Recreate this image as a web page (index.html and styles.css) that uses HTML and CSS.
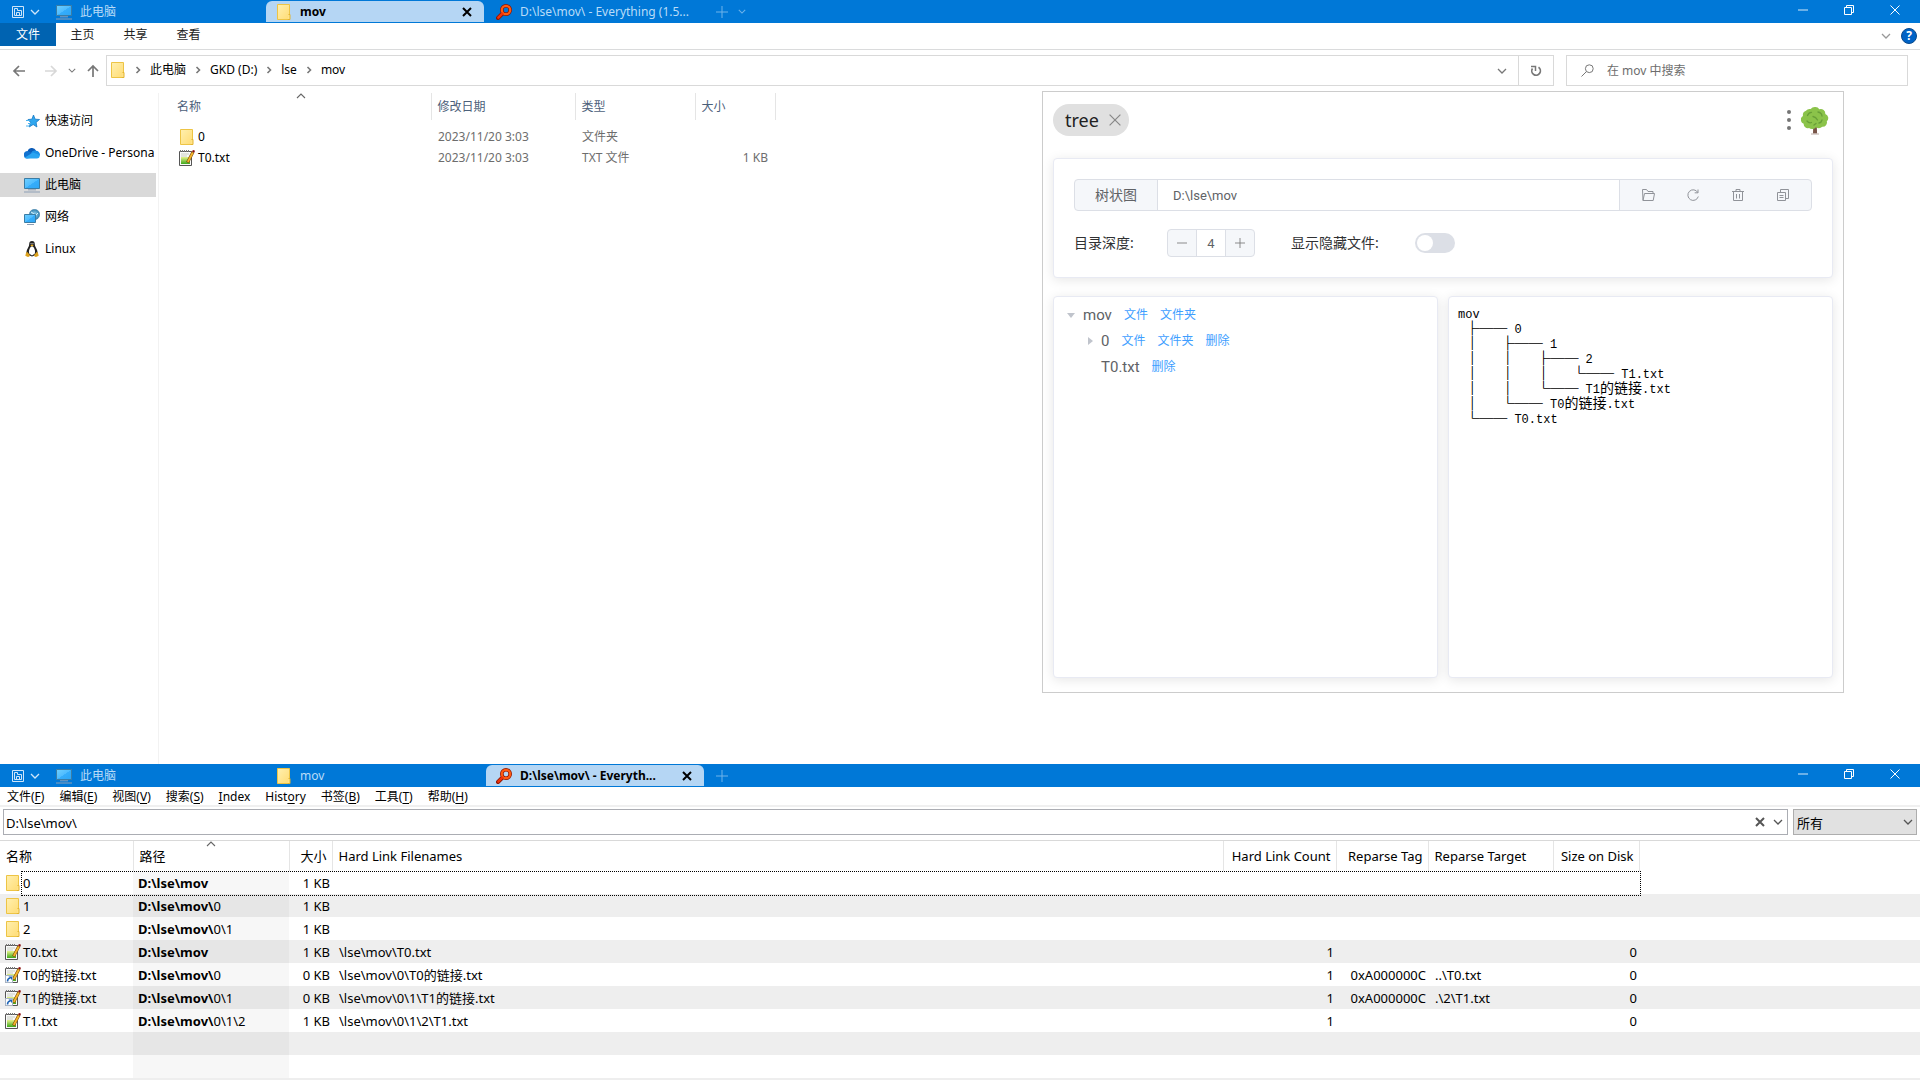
FILE: index.html
```html
<!DOCTYPE html>
<html lang="zh-CN">
<head>
<meta charset="utf-8">
<title>mov</title>
<link rel="stylesheet" href="styles.css">
</head>
<body>
<svg class="defs" aria-hidden="true">
  <defs>
    <linearGradient id="g-screen" x1="0" y1="0" x2="1" y2="1"><stop offset="0" stop-color="#6fd0ff"/><stop offset=".5" stop-color="#4fbcff"/><stop offset=".52" stop-color="#35adfb"/><stop offset="1" stop-color="#2ea6f5"/></linearGradient>
    <linearGradient id="g-folder" x1="0" y1="0" x2="1" y2="1"><stop offset="0" stop-color="#fff0b0"/><stop offset="1" stop-color="#ffdc74"/></linearGradient>
    <linearGradient id="g-green" x1="0" y1="0" x2="0" y2="1"><stop offset="0" stop-color="#e6f28a"/><stop offset="1" stop-color="#3fa81c"/></linearGradient>
    <radialGradient id="g-globe"><stop offset="0" stop-color="#9fdcf5"/><stop offset="1" stop-color="#2f7fae"/></radialGradient>
  </defs>
  <symbol id="i-folder" viewBox="0 0 16 16"><path d="M1.5.5h12v15h-12z" fill="url(#g-folder)" stroke="#edc445"/><path d="M12.500 10.500h1.500v5h-2.500" fill="#ffe38a" stroke="#e3b431"/></symbol>
  <symbol id="i-pc" viewBox="0 0 16 16"><path d="M.5 1.500h15v10h-15z" fill="url(#g-screen)" stroke="#3a7ca5"/><path d="M4 12.800h8M0 15h16" stroke="#8d9fb5" fill="none"/></symbol>
  <symbol id="i-note" viewBox="0 0 16 16"><path d="M.5 1.500h12v14H.5z" fill="#fafafa" stroke="#555"/><path d="M2 4h8M2 6h6" stroke="#c9cec2"/><path d="M2 7h9v7H2z" fill="url(#g-green)"/><path d="M1 1h10" stroke="#777" stroke-width="2" stroke-dasharray="1 1"/><path d="M14 2L8.500 12.500" stroke="#7a4a08" stroke-width="3"/><path d="M13.800 2.500L8.800 12" stroke="#f5b52c" stroke-width="1.900"/><path d="M12.800 1.300l1.400-1.300 1.800.8-.8 2z" fill="#8c0c0c"/></symbol>
  <symbol id="i-notelink" viewBox="0 0 16 16"><use href="#i-note"/><path d="M.5 8.500h7v7h-7z" fill="#fff" stroke="#a8b4c4"/><path d="M2.500 14.500q0-3 2.500-3.500" stroke="#1c62b5" stroke-width="1.600" fill="none"/><path d="M3.500 9.500h3.500V13z" fill="#1c62b5"/></symbol>
  <symbol id="i-find" viewBox="0 0 16 16"><path d="M2 14L6 10" stroke="#8d1400" stroke-width="4" stroke-linecap="round"/><circle cx="10" cy="6" r="4.200" fill="none" stroke="#8d1400" stroke-width="3.600"/><circle cx="10" cy="6" r="4.200" fill="none" stroke="#ff5a10" stroke-width="2.200"/><path d="M2.300 13.700L6.300 9.700" stroke="#f2330a" stroke-width="2.400" stroke-linecap="round"/></symbol>
  <symbol id="i-tabs" viewBox="0 0 12 12"><path d="M.5.5h11v11H.5z" fill="none" stroke="currentColor"/><path d="M2.500 9.500v-7h3v2h4v5zM4.500 9.500v-3h3v3" fill="none" stroke="currentColor"/></symbol>
  <symbol id="i-down" viewBox="0 0 10 6"><path d="M1 1l4 4 4-4" fill="none" stroke="currentColor" stroke-width="1.300"/></symbol>
  <symbol id="i-right" viewBox="0 0 6 8"><path d="M1.500 1l3 3-3 3" fill="none" stroke="currentColor" stroke-width="1.600"/></symbol>
  <symbol id="i-up" viewBox="0 0 10 6"><path d="M1 5l4-4 4 4" fill="none" stroke="currentColor" stroke-width="1.100"/></symbol>
  <symbol id="i-x" viewBox="0 0 10 10"><path d="M.5.5l9 9M9.500.5l-9 9" fill="none" stroke="currentColor"/></symbol>
  <symbol id="i-xb" viewBox="0 0 10 10"><path d="M1 1l8 8M9 1L1 9" fill="none" stroke="currentColor" stroke-width="2"/></symbol>
  <symbol id="i-plus" viewBox="0 0 12 12"><path d="M6 0v12M0 6h12" fill="none" stroke="currentColor"/></symbol>
  <symbol id="i-minus" viewBox="0 0 12 12"><path d="M0 6h12" fill="none" stroke="currentColor"/></symbol>
  <symbol id="i-restore" viewBox="0 0 10 10"><path d="M.5 2.500h7v7h-7zM2.500 2V.5h7v7H8" fill="none" stroke="currentColor"/></symbol>
  <symbol id="i-back" viewBox="0 0 14 12"><path d="M7 1L2 6l5 5M2 6h11" fill="none" stroke="currentColor" stroke-width="1.700"/></symbol>
  <symbol id="i-fwd" viewBox="0 0 14 12"><path d="M7 1l5 5-5 5M12 6H1" fill="none" stroke="currentColor" stroke-width="1.700"/></symbol>
  <symbol id="i-arrowup" viewBox="0 0 12 14"><path d="M1 7l5-5 5 5M6 2v11" fill="none" stroke="currentColor" stroke-width="1.700"/></symbol>
  <symbol id="i-reload" viewBox="0 0 12 12"><path d="M8.500 2.300A4.300 4.300 0 1 1 2.500 3.500" fill="none" stroke="currentColor" stroke-width="1.700"/><path d="M1 1.500h4.500V6" fill="none" stroke="currentColor" stroke-width="1.500"/></symbol>
  <symbol id="i-search" viewBox="0 0 13 13"><circle cx="8.300" cy="4.700" r="3.900" fill="none" stroke="currentColor"/><path d="M5.500 7.500l-5 5" stroke="currentColor"/></symbol>
  <symbol id="i-star" viewBox="0 0 16 16"><path d="M9.500 2l1.600 4.200 4.400.3-3.400 2.900.8 4.600-3.700-2.500L5.200 14l1.400-4.600L4 6.500l3.900-.3z" fill="#2fa7ef" stroke="#1177c4" stroke-width=".8"/><path d="M2 7.500h4M4 10.500h3M2 13h3.500" stroke="#4cb3ef"/></symbol>
  <symbol id="i-cloud" viewBox="0 0 16 12"><path d="M3.500 5A4.500 4.500 0 0 1 12 3.500L9 7z" fill="#0b5cb8"/><path d="M0 8.500A3.500 3.500 0 0 1 5 4.500L13 10l-10 1.500A3 3 0 0 1 0 8.500z" fill="#1272cf"/><path d="M7 5.800q2-3.300 5-2A4 4 0 0 1 16 8l-1 1z" fill="#1a8fe6"/><path d="M3 11.500q-1.500 0-2.200-1L9 5.500 15.800 8q0 3.500-3 3.500z" fill="#29a5f2"/></symbol>
  <symbol id="i-net" viewBox="0 0 16 16"><circle cx="10.500" cy="5.500" r="5.200" fill="url(#g-globe)" stroke="#4b87ab" stroke-width=".6"/><path d="M7 3q3 1 4 4l3-3" stroke="#d8f1fb" fill="none"/><path d="M.5 5.500h11v8H.5z" fill="url(#g-screen)" stroke="#3a7ca5"/><path d="M3 15.500h7" stroke="#8d9fb5"/></symbol>
  <symbol id="i-tux" viewBox="0 0 14 16"><path d="M7 0q2.800 0 2.800 3.200 0 2 1.400 4 2 3 1.300 6L7 15.500l-5.500-2.300q-.7-3 1.300-6 1.400-2 1.400-4Q4.200 0 7 0z" fill="#222"/><path d="M7 5.200q1.600 0 2.400 2.600 1.100 2.300.5 4.700L7 14.500l-2.900-2q-.6-2.400.5-4.700Q5.400 5.200 7 5.200z" fill="#fff"/><path d="M5.300 4.300L7 3.500l1.700.8L7 5.600z" fill="#f0b21a"/><path d="M5.600 2.700h.9M7.500 2.700h.9" stroke="#fff"/><path d="M2 10.800l3 3.200q-.3 2-2 2L.3 14.800 1 12zM12 10.800L9 14q.3 2 2 2l2.700-1.200L13 12z" fill="#dca11d"/></symbol>
  <symbol id="i-tree" viewBox="0 0 28 29"><path d="M12.300 18h3.400l.4 9.500H12z" fill="#795548"/><path d="M10 28h8" stroke="#bcaaa4"/><path d="M14 1a4.500 4.500 0 0 1 4.300 2.300 4.500 4.500 0 0 1 6 4.700 4.300 4.300 0 0 1 1.500 7.300 4.300 4.300 0 0 1-4.500 5.500 5 5 0 0 1-6.300.4 5 5 0 0 1-7 .7 4 4 0 0 1-5.300-4.100A4.300 4.300 0 0 1 2 10 4.600 4.600 0 0 1 5 4.700a4.600 4.600 0 0 1 4.700-1.600A5 5 0 0 1 14 1z" fill="#8bc34a"/><path d="M6.500 9.500q1-3 4-3.200M17 6q3.500.5 4 4M12 10.500q3 .5 4.500 3.500M6 15q2 2.500 4.500 1.500M18 17q2.500-.5 3-3M13 19l2-1.500" stroke="#689f38" stroke-width="1.300" fill="none" stroke-linecap="round"/></symbol>
  <symbol id="i-open" viewBox="0 0 14 14"><path d="M2 12.500l-.5-11h4l1.500 2h5v2M2 12.500l1.500-7h10l-1.300 7z" fill="none" stroke="currentColor"/></symbol>
  <symbol id="i-refresh" viewBox="0 0 14 14"><path d="M11.800 4.500A5.300 5.300 0 1 0 12.300 8.500M12 1.500v3.300H8.700" fill="none" stroke="currentColor"/></symbol>
  <symbol id="i-trash" viewBox="0 0 14 14"><path d="M1 3.500h12M5 3.500v-2h4v2M2.500 3.500v9h9v-9M5.500 6v4.500M8.500 6v4.500" fill="none" stroke="currentColor"/></symbol>
  <symbol id="i-copy" viewBox="0 0 14 14"><path d="M1.500 4.500h8v8h-8zM4.500 4.500v-3h8v9h-3M3.500 7.500h4M3.500 9.500h4" fill="none" stroke="currentColor"/></symbol>
</svg>

<main class="desktop">
<section class="explorer" aria-label="mov">
  <header class="titlebar">
    <button class="tabmenu" aria-label="标签"><svg class="s12"><use href="#i-tabs"/></svg><svg class="chev"><use href="#i-down"/></svg></button>
    <div class="tabs">
      <div class="tab"><svg class="s16"><use href="#i-pc"/></svg><span>此电脑</span></div>
      <div class="tab on"><svg class="s16"><use href="#i-folder"/></svg><span>mov</span><button class="tabx" aria-label="关闭标签"><svg class="s10"><use href="#i-xb"/></svg></button></div>
      <div class="tab"><svg class="s16"><use href="#i-find"/></svg><span>D:\lse\mov\ - Everything (1.5...</span></div>
    </div>
    <button class="newtab" aria-label="新标签"><svg class="s12"><use href="#i-plus"/></svg><svg class="chev small"><use href="#i-down"/></svg></button>
    <div class="winctl"><button aria-label="最小化"><svg class="s10"><use href="#i-minus"/></svg></button><button aria-label="还原"><svg class="s10"><use href="#i-restore"/></svg></button><button aria-label="关闭"><svg class="s10"><use href="#i-x"/></svg></button></div>
  </header>
  <nav class="ribbon">
    <button class="file">文件</button><button>主页</button><button>共享</button><button>查看</button>
    <div class="help"><svg class="chev"><use href="#i-down"/></svg><button aria-label="帮助">?</button></div>
  </nav>
  <div class="addressrow">
    <div class="history">
      <button aria-label="后退"><svg class="s14"><use href="#i-back"/></svg></button>
      <button class="off" aria-label="前进"><svg class="s14"><use href="#i-fwd"/></svg></button>
      <button aria-label="最近"><svg class="chev small"><use href="#i-down"/></svg></button>
      <button aria-label="上移"><svg class="s14"><use href="#i-arrowup"/></svg></button>
    </div>
    <div class="address">
      <div class="crumbs">
        <svg class="s16"><use href="#i-folder"/></svg><svg class="sep"><use href="#i-right"/></svg>
        <a href="#">此电脑</a><svg class="sep"><use href="#i-right"/></svg>
        <a href="#">GKD (D:)</a><svg class="sep"><use href="#i-right"/></svg>
        <a href="#">lse</a><svg class="sep"><use href="#i-right"/></svg>
        <a href="#">mov</a>
      </div>
      <button class="drop" aria-label="展开"><svg class="chev"><use href="#i-down"/></svg></button>
      <button class="reload" aria-label="刷新"><svg class="s12"><use href="#i-reload"/></svg></button>
    </div>
    <label class="search"><svg class="s13"><use href="#i-search"/></svg><input type="search" placeholder="在 mov 中搜索" aria-label="搜索"></label>
  </div>
  <div class="body">
    <nav class="places">
      <a href="#"><svg class="s16"><use href="#i-star"/></svg>快速访问</a>
      <a href="#"><svg class="s16"><use href="#i-cloud"/></svg>OneDrive - Persona</a>
      <a href="#" class="sel"><svg class="s16"><use href="#i-pc"/></svg>此电脑</a>
      <a href="#"><svg class="s16"><use href="#i-net"/></svg>网络</a>
      <a href="#"><svg class="s16"><use href="#i-tux"/></svg>Linux</a>
    </nav>
    <div class="listing">
      <table class="files">
        <colgroup><col class="f-name"><col class="f-date"><col class="f-type"><col class="f-size"></colgroup>
        <thead><tr><th class="sorted">名称<svg class="sort"><use href="#i-up"/></svg></th><th>修改日期</th><th>类型</th><th>大小</th></tr></thead>
        <tbody>
          <tr><td><span class="fname"><svg class="s16"><use href="#i-folder"/></svg>0</span></td><td>2023/11/20 3:03</td><td>文件夹</td><td></td></tr>
          <tr><td><span class="fname"><svg class="s16"><use href="#i-note"/></svg>T0.txt</span></td><td>2023/11/20 3:03</td><td>TXT 文件</td><td>1 KB</td></tr>
        </tbody>
      </table>
    </div>
    <section class="plugin" aria-label="tree">
      <header class="phead">
        <div class="chip">tree<button aria-label="移除"><svg class="s12"><use href="#i-x"/></svg></button></div>
        <button class="dots" aria-label="更多"><i></i><i></i><i></i></button>
        <svg class="logo"><use href="#i-tree"/></svg>
      </header>
      <form class="card config">
        <div class="group">
          <label for="dir">树状图</label><input id="dir" type="text" value="D:\lse\mov">
          <div class="tools">
            <button type="button" aria-label="打开"><svg class="s14"><use href="#i-open"/></svg></button>
            <button type="button" aria-label="刷新"><svg class="s14"><use href="#i-refresh"/></svg></button>
            <button type="button" aria-label="删除"><svg class="s14"><use href="#i-trash"/></svg></button>
            <button type="button" aria-label="复制"><svg class="s14"><use href="#i-copy"/></svg></button>
          </div>
        </div>
        <div class="options">
          <label for="depth">目录深度:</label>
          <div class="stepper"><button type="button" aria-label="减少"><svg class="s10"><use href="#i-minus"/></svg></button><input id="depth" type="text" value="4"><button type="button" aria-label="增加"><svg class="s10"><use href="#i-plus"/></svg></button></div>
          <label for="hidden" class="second">显示隐藏文件:</label>
          <input id="hidden" class="switch" type="checkbox">
        </div>
      </form>
      <div class="panes">
        <ul class="card nodes">
          <li><i class="caret open"></i><span>mov</span><a href="#">文件</a><a href="#">文件夹</a></li>
          <li class="child"><i class="caret"></i><span>0</span><a href="#">文件</a><a href="#">文件夹</a><a href="#">删除</a></li>
          <li class="child"><i class="caret leaf"></i><span>T0.txt</span><a href="#">删除</a></li>
        </ul>
        <pre class="card output">mov
 <b>├──</b> 0
 <b>│</b>   <b>├──</b> 1
 <b>│</b>   <b>│</b>   <b>├──</b> 2
 <b>│</b>   <b>│</b>   <b>│</b>   <b>└──</b> T1.txt
 <b>│</b>   <b>│</b>   <b>└──</b> T1<em>的链接</em>.txt
 <b>│</b>   <b>└──</b> T0<em>的链接</em>.txt
 <b>└──</b> T0.txt</pre>
      </div>
    </section>
  </div>
</section>

<section class="everything" aria-label="Everything">
  <header class="titlebar">
    <button class="tabmenu" aria-label="标签"><svg class="s12"><use href="#i-tabs"/></svg><svg class="chev"><use href="#i-down"/></svg></button>
    <div class="tabs">
      <div class="tab"><svg class="s16"><use href="#i-pc"/></svg><span>此电脑</span></div>
      <div class="tab"><svg class="s16"><use href="#i-folder"/></svg><span>mov</span></div>
      <div class="tab on"><svg class="s16"><use href="#i-find"/></svg><span>D:\lse\mov\ - Everyth...</span><button class="tabx" aria-label="关闭标签"><svg class="s10"><use href="#i-xb"/></svg></button></div>
    </div>
    <button class="newtab" aria-label="新标签"><svg class="s12"><use href="#i-plus"/></svg></button>
    <div class="winctl"><button aria-label="最小化"><svg class="s10"><use href="#i-minus"/></svg></button><button aria-label="还原"><svg class="s10"><use href="#i-restore"/></svg></button><button aria-label="关闭"><svg class="s10"><use href="#i-x"/></svg></button></div>
  </header>
  <nav class="menubar">
    <button>文件(<u>F</u>)</button><button>编辑(<u>E</u>)</button><button>视图(<u>V</u>)</button><button>搜索(<u>S</u>)</button><button><u>I</u>ndex</button><button>Hist<u>o</u>ry</button><button>书签(<u>B</u>)</button><button>工具(<u>T</u>)</button><button>帮助(<u>H</u>)</button>
  </nav>
  <div class="query">
    <div class="qbox"><input type="text" value="D:\lse\mov\" aria-label="搜索"><button aria-label="清除"><svg class="s10"><use href="#i-xb"/></svg></button><button aria-label="历史"><svg class="chev"><use href="#i-down"/></svg></button></div>
    <div class="filter"><select aria-label="筛选"><option>所有</option></select><svg class="chev"><use href="#i-down"/></svg></div>
  </div>
  <table class="results">
    <colgroup><col class="c-name"><col class="c-path"><col class="c-size"><col class="c-links"><col class="c-count"><col class="c-tag"><col class="c-target"><col class="c-disk"><col></colgroup>
    <thead><tr><th>名称</th><th class="sorted">路径<svg class="sort"><use href="#i-up"/></svg></th><th class="n">大小</th><th>Hard Link Filenames</th><th class="n">Hard Link Count</th><th class="n">Reparse Tag</th><th>Reparse Target</th><th class="n">Size on Disk</th><th class="rest"></th></tr></thead>
    <tbody>
      <tr><td class="focused"><span class="ename"><svg class="s16"><use href="#i-folder"/></svg>0</span></td><td><b>D:\lse\mov</b></td><td class="n">1 KB</td><td></td><td></td><td></td><td></td><td></td><td></td></tr>
      <tr><td><span class="ename"><svg class="s16"><use href="#i-folder"/></svg>1</span></td><td><b>D:\lse\mov\</b>0</td><td class="n">1 KB</td><td></td><td></td><td></td><td></td><td></td><td></td></tr>
      <tr><td><span class="ename"><svg class="s16"><use href="#i-folder"/></svg>2</span></td><td><b>D:\lse\mov\</b>0\1</td><td class="n">1 KB</td><td></td><td></td><td></td><td></td><td></td><td></td></tr>
      <tr><td><span class="ename"><svg class="s16"><use href="#i-note"/></svg>T0.txt</span></td><td><b>D:\lse\mov</b></td><td class="n">1 KB</td><td>\lse\mov\T0.txt</td><td class="n">1</td><td></td><td></td><td class="n">0</td><td></td></tr>
      <tr><td><span class="ename"><svg class="s16"><use href="#i-notelink"/></svg>T0的链接.txt</span></td><td><b>D:\lse\mov\</b>0</td><td class="n">0 KB</td><td>\lse\mov\0\T0的链接.txt</td><td class="n">1</td><td class="n">0xA000000C</td><td>..\T0.txt</td><td class="n">0</td><td></td></tr>
      <tr><td><span class="ename"><svg class="s16"><use href="#i-notelink"/></svg>T1的链接.txt</span></td><td><b>D:\lse\mov\</b>0\1</td><td class="n">0 KB</td><td>\lse\mov\0\1\T1的链接.txt</td><td class="n">1</td><td class="n">0xA000000C</td><td>.\2\T1.txt</td><td class="n">0</td><td></td></tr>
      <tr><td><span class="ename"><svg class="s16"><use href="#i-note"/></svg>T1.txt</span></td><td><b>D:\lse\mov\</b>0\1\2</td><td class="n">1 KB</td><td>\lse\mov\0\1\2\T1.txt</td><td class="n">1</td><td></td><td></td><td class="n">0</td><td></td></tr>
      <tr><td></td><td></td><td></td><td></td><td></td><td></td><td></td><td></td><td></td></tr>
      <tr><td></td><td></td><td></td><td></td><td></td><td></td><td></td><td></td><td></td></tr>
    </tbody>
  </table>
  <div class="statusline"></div>
</section>
</main>
</body>
</html>
```
FILE: styles.css
```css
* { box-sizing: border-box; }
body { margin: 0; background: #fff; color: #000; font: 12px/16px "Noto Sans", "Noto Sans CJK SC", sans-serif; }
button, input, select { font: inherit; color: inherit; margin: 0; padding: 0; border: 0; background: none; border-radius: 0; outline: 0; }
button { display: flex; align-items: center; justify-content: center; }
a { color: inherit; text-decoration: none; }
svg { flex: none; display: block; }
.defs { position: absolute; width: 0; height: 0; }
.s10 { width: 10px; height: 10px; }
.s12 { width: 12px; height: 12px; }
.s13 { width: 13px; height: 13px; }
.s14 { width: 14px; height: 14px; }
.s16 { width: 16px; height: 16px; }
.chev { width: 10px; height: 6px; }
.chev.small { width: 8px; height: 5px; }

.desktop { display: flex; flex-direction: column; min-height: 100vh; }
.explorer { min-height: 764px; display: flex; flex-direction: column; }

/* window title bars */
.titlebar { height: 23px; background: #0078d7; color: #b9dcf8; display: flex; align-items: center; }
.tabmenu { width: 46px; gap: 6px; color: #cfe6fa; padding-left: 12px; justify-content: flex-start; }
.tabs { display: flex; gap: 2px; align-self: stretch; padding: 1px 0; }
.tab { width: 218px; display: flex; align-items: center; gap: 8px; padding: 0 12px 0 10px; border-radius: 6px 6px 0 0; white-space: nowrap; }
.tab.on { background: #b5d6f4; color: #000; font-weight: bold; }
.tabx { margin-left: auto; }
.newtab { margin-left: 12px; gap: 10px; color: #6fb3ea; }
.winctl { margin-left: auto; display: flex; color: #fff; padding-right: 2px; align-self: stretch; }
.winctl button { width: 46px; padding-bottom: 3px; }

/* ribbon */
.ribbon { height: 27px; border-bottom: 1px solid #dadbdc; display: flex; align-items: flex-start; color: #222; }
.ribbon > button { width: 53px; height: 24px; }
.ribbon > .file { width: 56px; height: 23px; background: #0063b1; color: #fff; }
.help { margin-left: auto; display: flex; align-items: center; gap: 10px; padding-right: 3px; height: 26px; color: #999; }
.help button { width: 16px; height: 16px; border-radius: 50%; background: #0063c6; border: 1px solid #0a4a8c; color: #fff; font-weight: bold; }

/* address row */
.addressrow { display: flex; padding: 5px 12px 0 0; height: 36px; }
.history { width: 106px; display: flex; align-items: center; justify-content: space-between; padding: 0 6px 0 12px; color: #777; }
.history .off { color: #d8d8d8; margin-left: 8px; }
.address { flex: 1; border: 1px solid #d9d9d9; display: flex; }
.crumbs { flex: 1; display: flex; align-items: center; gap: 9px; padding: 0 0 2px 3px; }
.crumbs .sep { width: 6px; height: 8px; color: #777; }
.drop { width: 32px; color: #777; }
.reload { width: 35px; border-left: 1px solid #d9d9d9; color: #777; }
.search { width: 342px; margin-left: 12px; border: 1px solid #d9d9d9; display: flex; align-items: center; gap: 13px; padding-left: 14px; color: #777; }
.search input { flex: 1; }
.search input::placeholder { color: #6d6d6d; opacity: 1; }

/* explorer body */
.body { flex: 1; display: flex; align-items: stretch; padding-top: 5px; }
.places { width: 159px; margin-top: 2px; padding: 16px 2px 0 0; border-right: 1px solid #f2f2f2; display: flex; flex-direction: column; gap: 8px; }
.places a { height: 24px; display: flex; align-items: center; gap: 5px; padding-left: 24px; white-space: nowrap; }
.places .sel { background: #d9d9d9; }
.listing { flex: 1; padding: 2px 0 0 13px; }
table { border-collapse: collapse; border-spacing: 0; table-layout: fixed; }
th { font-weight: normal; text-align: left; }
td, th { padding: 0; white-space: nowrap; }
.sorted { position: relative; }
.sort { position: absolute; top: 0; left: 50%; width: 10px; height: 6px; margin-left: -5px; color: #666; }
.files { width: 603px; color: #6d6d6d; }
.f-name { width: 259px; } .f-date { width: 144px; } .f-type { width: 120px; } .f-size { width: 80px; }
.files th { height: 27px; padding-left: 6px; border-right: 1px solid #e5e5e5; color: #4c607a; }
.files tbody::before { content: ""; display: block; height: 6px; }
.files td { height: 21px; padding-left: 7px; }
.files th:first-child, .files td:first-child { padding-left: 5px; }
.files td:last-child { text-align: right; padding-right: 7px; }
.fname { display: flex; align-items: center; gap: 3px; color: #000; padding-left: 2px; }

/* tree plugin panel */
.plugin { width: 802px; min-height: 602px; margin-right: 76px; align-self: flex-start; border: 1px solid #ccc; padding: 12px 10px 14px; color: #303133; display: flex; flex-direction: column; }
.phead { height: 32px; display: flex; align-items: center; }
.chip { height: 32px; width: 76px; border-radius: 16px; background: #e0e0e0; font-size: 18px; display: flex; align-items: center; justify-content: space-between; padding: 0 8px 0 12px; color: #212121; }
.chip button { color: #888; }
.dots { margin-left: auto; flex-direction: column; gap: 4px; width: 12px; }
.dots i { width: 4px; height: 4px; border-radius: 50%; background: #757575; }
.logo { width: 28px; height: 29px; margin: 0 4px 0 6px; }
.card { background: #fff; border: 1px solid #e8eaf3; border-radius: 4px; box-shadow: 0 2px 12px rgba(0,0,0,.1); margin: 0; }
.config { margin-top: 22px; padding: 20px 20px 0; height: 120px; }
.group { height: 32px; display: flex; border: 1px solid #dcdfe6; border-radius: 4px; overflow: hidden; font-size: 14px; color: #606266; background: #f5f7fa; }
.group label { width: 83px; border-right: 1px solid #dcdfe6; display: flex; align-items: center; justify-content: center; }
.group input { flex: 1; background: #fff; padding: 0 15px; font: 13px Roboto, sans-serif; }
.tools { width: 192px; border-left: 1px solid #dcdfe6; display: flex; padding: 0 5px; color: #909399; }
.tools button { flex: 1; }
.options { margin-top: 18px; display: flex; align-items: center; height: 28px; font-size: 14px; }
.options label { width: 93px; }
.options .second { width: 124px; margin-left: 36px; }
.stepper { width: 88px; height: 28px; border: 1px solid #dcdfe6; border-radius: 4px; display: flex; overflow: hidden; background: #f5f7fa; color: #606266; }
.stepper button { flex: 1; color: #777; }
.stepper input { width: 30px; border: solid #dcdfe6; border-width: 0 1px; background: #fff; text-align: center; font: 13px Roboto, sans-serif; }
.switch { appearance: none; width: 40px; height: 20px; border-radius: 10px; background: #dcdfe6; display: flex; align-items: center; padding-left: 2px; }
.switch::before { content: ""; width: 16px; height: 16px; border-radius: 50%; background: #fff; }
.panes { flex: 1; margin-top: 18px; display: grid; grid-template-columns: 1fr 1fr; gap: 10px; }
.nodes { list-style: none; padding: 5px 13px; font: 15px/26px Roboto, "Noto Sans CJK SC", sans-serif; color: #606266; }
.nodes li { display: flex; align-items: center; height: 26px; }
.nodes .child { padding-left: 18px; }
.nodes a { font-size: 12px; color: #409eff; margin-left: 12px; }
.caret { width: 16px; display: flex; }
.caret::before { content: ""; border: solid transparent; border-width: 4px 0 4px 5px; border-left-color: #c0c4cc; margin-left: 3px; }
.caret.open::before { border-color: #c0c4cc transparent transparent; border-width: 5px 4px 0; margin-left: 0; }
.caret.leaf::before { border-color: transparent; }
.output { padding: 11px 9px; font: 12px/15px "Liberation Mono", "Noto Sans CJK SC", monospace; color: #000; }
.output b, .output em { font: 14px/0 "Noto Sans CJK SC", sans-serif; }
.output b { text-shadow: 0 0 0 #000; }

/* everything window */
.everything { flex: 1; display: flex; flex-direction: column; }
.menubar { height: 20px; display: flex; align-items: center; gap: 15px; padding: 1px 0 0 7px; border-bottom: 2px solid #f0f0f0; }
u { text-underline-offset: 2px; }
.query { height: 34px; padding: 2px 3px 5px; display: flex; gap: 5px; border-bottom: 1px solid #d9d9d9; font-size: 13px; }
.qbox { flex: 1; border: 1px solid #abadb3; display: flex; color: #555; }
.qbox input { flex: 1; padding: 2px 0 0 2px; color: #000; }
.qbox button { width: 18px; }
.filter { width: 124px; border: 1px solid #adadad; background: #e1e1e1; display: grid; align-items: center; }
.filter select { appearance: none; width: 100%; height: 100%; padding: 2px 0 0 3px; grid-area: 1 / 1; }
.filter .chev { grid-area: 1 / 1; justify-self: end; margin-right: 3px; color: #555; pointer-events: none; }
.results { width: 100%; font-size: 13px; }
.c-name { width: 133px; } .c-path { width: 156px; } .c-size { width: 43px; } .c-links { width: 891px; } .c-count { width: 113px; } .c-tag { width: 92px; } .c-target { width: 125px; } .c-disk { width: 86px; }
.results th { height: 30px; border-right: 1px solid #e5e5e5; padding: 0 5px 0 6px; }
.results .rest { border: 0; }
.results td { height: 23px; padding: 0 2px 0 7px; }
.results td:nth-child(2), .results td:first-child { padding: 0 0 0 5px; }
.results .n { text-align: right; padding-left: 0; }
.ename { display: flex; align-items: center; gap: 2px; }
.results tr:nth-child(even) td { background: #eee; }
.results td:nth-child(2) { background: #f7f7f7; }
.results tr:nth-child(even) td:nth-child(2) { background: #e6e6e6; }
.focused { position: relative; }
.focused::after { content: ""; position: absolute; z-index: 1; left: 21px; top: 0; width: 1618px; height: 23px; border: 1px dotted #000; }
.statusline { flex: 1; background: #eee; }
```
